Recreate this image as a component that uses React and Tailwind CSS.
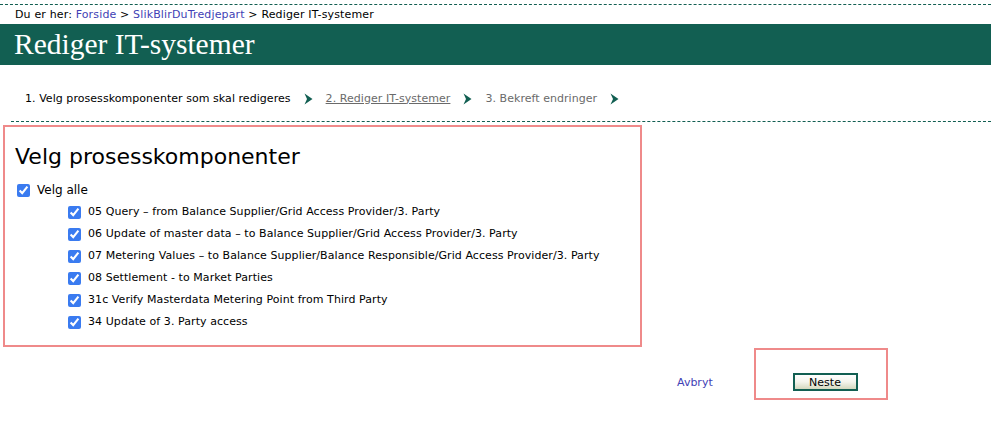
import React from 'react';

const items = [
  '05 Query \u2013 from Balance Supplier/Grid Access Provider/3. Party',
  '06 Update of master data \u2013 to Balance Supplier/Grid Access Provider/3. Party',
  '07 Metering Values \u2013 to Balance Supplier/Balance Responsible/Grid Access Provider/3. Party',
  '08 Settlement - to Market Parties',
  '31c Verify Masterdata Metering Point from Third Party',
  '34 Update of 3. Party access',
];

function Arrow() {
  return (
    <svg width="9" height="12" viewBox="0 0 9 12" className="ml-[13px] mr-[13px]">
      <path d="M0.5 0.5 L8.5 6 L0.5 11.5 L3 6 Z" fill="#125f52" />
    </svg>
  );
}

export default function App() {
  return (
    <div className="w-[991px] h-[425px] bg-white text-black font-['DejaVu_Sans',Verdana,sans-serif] overflow-hidden">
      {/* top dashed + breadcrumb */}
      <div className="border-t border-dashed border-[#125f52] mt-[4px]" />
      <div className="pl-[15px] pt-[2px] h-[19px] text-[11px] leading-[15px] tracking-[0.15px]">
        Du er her: <a className="text-[#3f3fb5]">Forside</a> &gt; <a className="text-[#3f3fb5]">SlikBlirDuTredjepart</a> &gt; Rediger IT-systemer
      </div>

      {/* title bar */}
      <div className="bg-[#125f52] h-[41px] pl-[14px] flex items-center">
        <h1 className="text-white text-[29.5px] leading-none font-['Liberation_Serif',serif] pt-[1px]">Rediger IT-systemer</h1>
      </div>

      {/* steps */}
      <div className="flex items-center pl-[25px] pt-[12px] h-[56px] text-[11px] tracking-[0.05px]">
        <span>1. Velg prosesskomponenter som skal redigeres</span>
        <Arrow />
        <span className="text-[#6a6a6a] underline">2. Rediger IT-systemer</span>
        <Arrow />
        <span className="text-[#6a6a6a]">3. Bekreft endringer</span>
        <Arrow />
      </div>
      <div className="ml-[11px] border-t border-dashed border-[#125f52]" />

      {/* selection box */}
      <div className="ml-[3px] mt-[3px] w-[639px] h-[222px] border-2 border-[#ef8a8a] pl-[10px] pt-[16px]">
        <h2 className="text-[22px] leading-[28px] mb-[9px]">Velg prosesskomponenter</h2>
        <label className="flex items-center gap-[7px] h-[20px] pl-[2px] text-[12px]">
          <input type="checkbox" defaultChecked className="w-[13px] h-[13px] m-0 accent-[#3a7bf0]" />
          Velg alle
        </label>
        <div className="pl-[53px] pt-[1px]">
          {items.map((t) => (
            <label key={t} className="flex items-center gap-[7px] h-[22px] text-[11px] tracking-[0.07px]">
              <input type="checkbox" defaultChecked className="w-[13px] h-[13px] m-0 accent-[#3a7bf0]" />
              {t}
            </label>
          ))}
        </div>
      </div>

      {/* actions */}
      <div className="flex mt-[1px]">
        <div className="w-[754px] pt-[27px] pl-[677px] text-[11px]">
          <a className="text-[#3f3fb5]">Avbryt</a>
        </div>
        <div className="w-[134px] h-[52px] border-2 border-[#ef8a8a] flex justify-center pt-[23px] pl-[8px]">
          <button className="w-[65px] h-[18px] border-2 border-[#125f52] text-[11px] leading-none bg-gradient-to-b from-white via-[#f4f4ec] to-[#d4d8be]">
            Neste
          </button>
        </div>
      </div>
    </div>
  );
}
